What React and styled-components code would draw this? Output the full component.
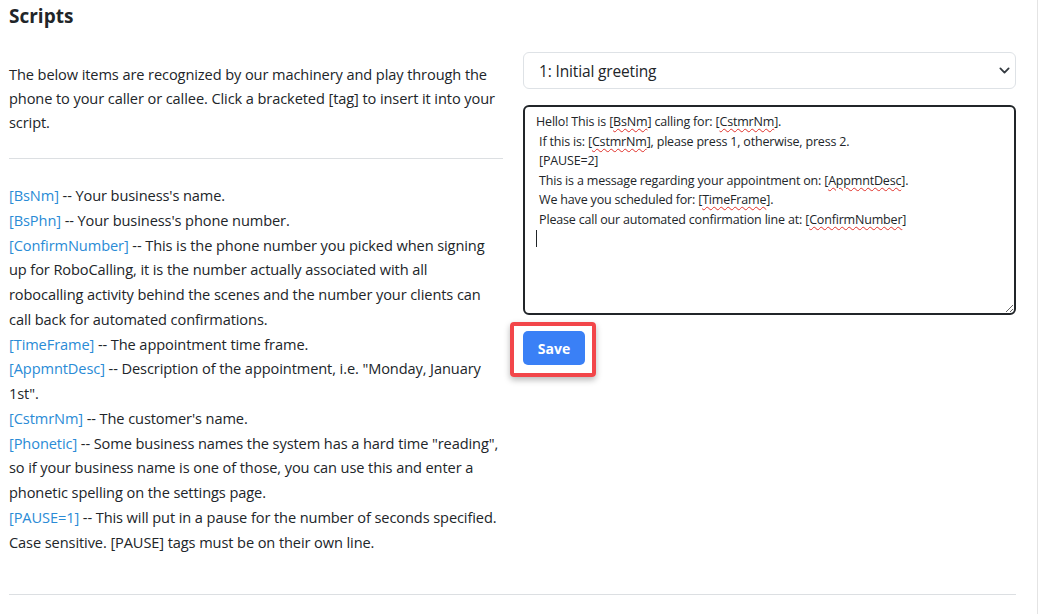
import React from 'react'
import styled, { createGlobalStyle } from 'styled-components'

const GlobalStyle = createGlobalStyle`
  * { box-sizing: border-box; }
  body {
    margin: 0;
    background: #fff;
    color: #212529;
    font-family: "Segoe UI", "Open Sans", "Noto Sans", sans-serif;
  }
`

const Page = styled.div`
  width: 1038px;
  min-height: 614px;
  padding: 0 21px 0 9px;
  border-right: 1px solid #e4e4e4;
`

const Title = styled.h2`
  margin: 0;
  padding-top: 3px;
  font-size: 19px;
  font-weight: 700;
  line-height: 26px;
`

const Row = styled.div`
  display: grid;
  grid-template-columns: 494px 493px;
  column-gap: 20px;
  margin-top: 23px;
`

const LeftCol = styled.div`
  padding-top: 10px;
  font-size: 14.6px;
  letter-spacing: -0.1px;
`

const Intro = styled.p`
  margin: 0;
  line-height: 24px;
`

const Divider = styled.hr`
  margin: ${p => p.$gap || '24px 0'};
  border: 0;
  border-top: 1px solid #dcdfe2;
`

const TagList = styled.div`
  line-height: 24.75px;
`

const Tag = styled.a`
  color: #2a8bd6;
  text-decoration: none;
  cursor: pointer;
`

const RightCol = styled.div`
  display: flex;
  flex-direction: column;
  align-items: flex-start;
`

const SelectWrap = styled.div`
  position: relative;
  width: 100%;
`

const Select = styled.select`
  appearance: none;
  width: 100%;
  height: 37px;
  padding: 0 36px 0 15px;
  border: 1px solid #dee2e6;
  border-radius: 6px;
  background: #fff;
  color: #212529;
  font-family: inherit;
  font-size: 15.5px;
  letter-spacing: -0.15px;
`

const Chevron = styled.svg`
  position: absolute;
  right: 6px;
  top: 13px;
  width: 11px;
  height: 11px;
  pointer-events: none;
`

const Editor = styled.div`
  width: 100%;
  height: 210px;
  margin-top: 16px;
  padding: 5px 11px;
  border: 2px solid #212529;
  border-radius: 6px;
  font-size: 12.5px;
  letter-spacing: -0.18px;
  line-height: 19.5px;
  white-space: pre-wrap;
  overflow: auto;
  resize: vertical;
  outline: none;
`

const Misspelt = styled.span`
  text-decoration: underline wavy #e0302a;
  text-decoration-thickness: 1px;
  text-underline-offset: 2px;
`

const Caret = styled.span`
  display: inline-block;
  width: 1px;
  height: 17px;
  margin-top: 1px;
  background: #212529;
  vertical-align: top;
`

const Highlight = styled.div`
  position: relative;
  margin-top: 16px;

  &::after {
    content: '';
    position: absolute;
    top: -9px;
    left: -13px;
    right: -11px;
    bottom: -12px;
    border: 4px solid #f2464a;
    border-radius: 4px;
    box-shadow: 0 3px 6px rgba(0, 0, 0, 0.28);
    pointer-events: none;
  }
`

const SaveButton = styled.button`
  width: 62px;
  height: 34px;
  border: 0;
  border-radius: 5px;
  background: #3a80f6;
  color: #fff;
  font-family: inherit;
  font-size: 14px;
  font-weight: 700;
  cursor: pointer;
`

const tags = [
  ['BsNm', "Your business's name."],
  ['BsPhn', "Your business's phone number."],
  ['ConfirmNumber', 'This is the phone number you picked when signing up for RoboCalling, it is the number actually associated with all robocalling activity behind the scenes and the number your clients can call back for automated confirmations.'],
  ['TimeFrame', 'The appointment time frame.'],
  ['AppmntDesc', 'Description of the appointment, i.e. "Monday, January 1st".'],
  ['CstmrNm', "The customer's name."],
  ['Phonetic', 'Some business names the system has a hard time "reading", so if your business name is one of those, you can use this and enter a phonetic spelling on the settings page.'],
  ['PAUSE=1', 'This will put in a pause for the number of seconds specified. Case sensitive. [PAUSE] tags must be on their own line.']
]

const W = ({ children }) => <>[<Misspelt>{children}</Misspelt>]</>

const App = () => (
  <>
    <GlobalStyle />
    <Page>
      <Title>Scripts</Title>
      <Row>
        <LeftCol>
          <Intro>
            The below items are recognized by our machinery and play through the phone to your caller or callee. Click a bracketed [tag] to insert it into your script.
          </Intro>
          <Divider />
          <TagList>
            {tags.map(([tag, desc]) => (
              <div key={tag}>
                <Tag>[{tag}]</Tag> -- {desc}
              </div>
            ))}
          </TagList>
        </LeftCol>
        <RightCol>
          <SelectWrap>
            <Select defaultValue='1'>
              <option value='1'>1: Initial greeting</option>
              <option value='2'>2: Confirmed</option>
              <option value='3'>3: Cancelled</option>
            </Select>
            <Chevron viewBox='0 0 16 16'>
              <path d='m2 5 6 6 6-6' fill='none' stroke='#343a40' strokeWidth='2.6' strokeLinecap='round' strokeLinejoin='round' />
            </Chevron>
          </SelectWrap>
          <Editor role='textbox' contentEditable suppressContentEditableWarning spellCheck={false}>
            Hello! This is <W>BsNm</W> calling for: <W>CstmrNm</W>.{'\n'}
            {' '}If this is: <W>CstmrNm</W>, please press 1, otherwise, press 2.{'\n'}
            {' '}[PAUSE=2]{'\n'}
            {' '}This is a message regarding your appointment on: <W>AppmntDesc</W>.{'\n'}
            {' '}We have you scheduled for: <W>TimeFrame</W>.{'\n'}
            {' '}Please call our automated confirmation line at: <W>ConfirmNumber</W>{'\n'}
            <Caret />
          </Editor>
          <Highlight>
            <SaveButton>Save</SaveButton>
          </Highlight>
        </RightCol>
      </Row>
      <Divider $gap='40px 0 0' />
    </Page>
  </>
)

export default App
